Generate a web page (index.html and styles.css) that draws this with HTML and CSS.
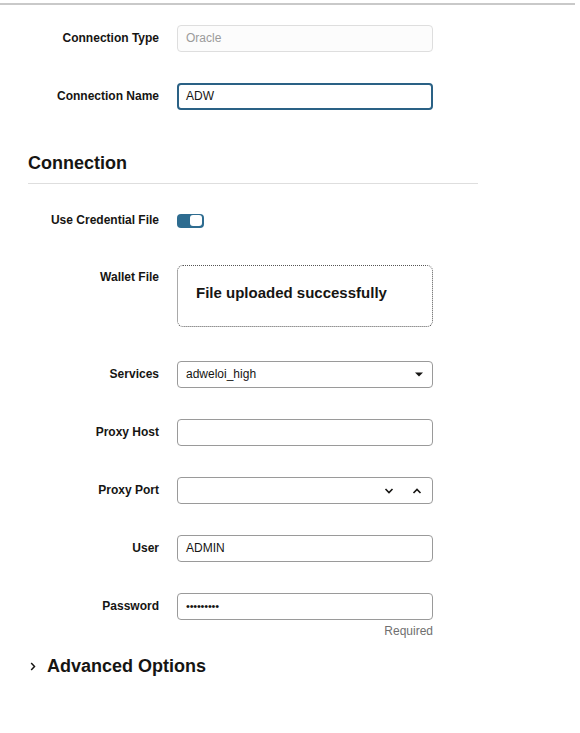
FILE: index.html
```html
<!DOCTYPE html>
<html lang="en">
<head>
<meta charset="utf-8">
<title>Connection</title>
<link rel="stylesheet" href="styles.css">
</head>
<body>
<div class="topline"></div>
<main class="form">
  <section class="group first">
    <div class="field">
      <label class="field-label">Connection Type</label>
      <div class="input disabled">Oracle</div>
    </div>
    <div class="field">
      <label class="field-label">Connection Name</label>
      <div class="input focused">ADW</div>
    </div>
  </section>

  <h2 class="section-title">Connection</h2>

  <section class="group second">
    <div class="field">
      <label class="field-label">Use Credential File</label>
      <div class="toggle-wrap"><span class="toggle"><span class="knob"></span></span></div>
    </div>
    <div class="field wallet">
      <label class="field-label">Wallet File</label>
      <div class="dropzone">File uploaded successfully</div>
    </div>
    <div class="field services">
      <label class="field-label">Services</label>
      <div class="input select">adweloi_high
        <svg class="caret" width="8" height="5" viewBox="0 0 8 5"><path d="M0 0.5h8L4 4.5z" fill="#161513"/></svg>
      </div>
    </div>
    <div class="field">
      <label class="field-label">Proxy Host</label>
      <div class="input"></div>
    </div>
    <div class="field">
      <label class="field-label">Proxy Port</label>
      <div class="input spinner">
        <svg class="chev down" width="10" height="6" viewBox="0 0 10 6"><path d="M1.5 1l3.5 3.5L8.5 1" fill="none" stroke="#161513" stroke-width="1.6"/></svg>
        <svg class="chev up" width="10" height="6" viewBox="0 0 10 6"><path d="M1.5 5L5 1.5 8.5 5" fill="none" stroke="#161513" stroke-width="1.6"/></svg>
      </div>
    </div>
    <div class="field">
      <label class="field-label">User</label>
      <div class="input">ADMIN</div>
    </div>
    <div class="field">
      <label class="field-label">Password</label>
      <div class="control-col">
        <div class="input password">•••••••••</div>
        <div class="hint">Required</div>
      </div>
    </div>
  </section>

  <div class="advanced">
    <svg class="adv-chev" width="6" height="9" viewBox="0 0 6 9"><path d="M1.2 1l3.3 3.5L1.2 8" fill="none" stroke="#161513" stroke-width="1.5"/></svg>
    <span>Advanced Options</span>
  </div>
</main>
</body>
</html>
```

FILE: styles.css
```css
html, body {
  margin: 0;
  padding: 0;
  background: #ffffff;
}

body {
  font-family: "Liberation Sans", Arial, Helvetica, sans-serif;
  color: #161513;
}

.topline {
  margin-top: 3px;
  width: 575px;
  height: 2px;
  background: #c9c9c9;
}

.form {
  padding-left: 28px;
  width: 450px;
}

.group.first {
  padding-top: 20px;
}

.field {
  display: flex;
  align-items: flex-start;
}

.field + .field {
  margin-top: 31px;
}

.field-label {
  width: 131px;
  margin-right: 18px;
  text-align: right;
  font-size: 12px;
  font-weight: bold;
  line-height: 27px;
  white-space: nowrap;
}

.input {
  box-sizing: border-box;
  width: 256px;
  height: 27px;
  border: 1px solid #9a9a9a;
  border-radius: 4px;
  padding: 0 8px;
  font-size: 12px;
  line-height: 25px;
  color: #161513;
  background: #fff;
  position: relative;
}

.input.disabled {
  border-color: #dedede;
  color: #9b9b9b;
  background: #fcfcfc;
}

.input.focused {
  border: 2px solid #2a6185;
  padding: 0 7px;
  line-height: 23px;
}

.section-title {
  margin: 41px 0 0;
  font-size: 18px;
  font-weight: bold;
  line-height: 24px;
  padding-bottom: 8px;
  border-bottom: 1px solid #dedede;
}

.group.second {
  margin-top: 23px;
}

.toggle-wrap {
  height: 27px;
  display: flex;
  align-items: center;
}

.toggle {
  display: flex;
  align-items: center;
  justify-content: flex-end;
  box-sizing: border-box;
  width: 27px;
  height: 14px;
  border-radius: 4px;
  background: #2e6c90;
  padding-right: 2px;
}

.knob {
  width: 12px;
  height: 11px;
  border-radius: 3px;
  background: #ffffff;
}

.field.wallet {
  margin-top: 30px;
}

.dropzone {
  box-sizing: border-box;
  margin-top: 1px;
  width: 256px;
  height: 62px;
  border: 1px dotted #555;
  border-radius: 6px;
  padding: 18px 0 0 18px;
  font-size: 15px;
  font-weight: bold;
  line-height: 18px;
}

.field.services {
  margin-top: 34px;
}

.select .caret {
  position: absolute;
  right: 9px;
  top: 10px;
}

.spinner .chev {
  position: absolute;
  top: 10px;
}

.spinner .down {
  right: 38px;
}

.spinner .up {
  right: 10px;
}

.control-col {
  display: flex;
  flex-direction: column;
  align-items: flex-end;
  width: 256px;
}

.password {
  font-size: 11px;
  letter-spacing: -0.2px;
}

.hint {
  margin-top: 4px;
  font-size: 12px;
  line-height: 14px;
  color: #6f6f6f;
}

.advanced {
  margin-top: 16px;
  display: flex;
  align-items: center;
  font-size: 18px;
  font-weight: bold;
  line-height: 24px;
}

.adv-chev {
  margin-left: 2px;
  margin-right: 11px;
}
```
